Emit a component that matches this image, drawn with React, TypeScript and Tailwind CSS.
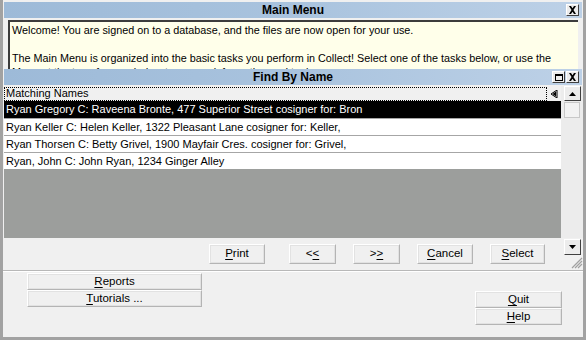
import React from 'react';

const rows = [
  'Ryan Gregory C: Raveena Bronte, 477 Superior Street cosigner for: Bron',
  'Ryan Keller C: Helen Keller, 1322 Pleasant Lane cosigner for: Keller,',
  'Ryan Thorsen C: Betty Grivel, 1900 Mayfair Cres. cosigner for: Grivel,',
  'Ryan, John C: John Ryan, 1234 Ginger Alley',
];

function TitleBar({ title, children }: { title: string; children?: React.ReactNode }) {
  return (
    <div className="relative h-[16px] bg-gradient-to-r from-[#9dbad8] via-[#a9c3de] to-[#bdd1e7] flex items-center justify-center">
      <span className="font-bold text-[12px] leading-none text-black">{title}</span>
      <div className="absolute right-[3px] top-[2px] flex gap-[1px]">{children}</div>
    </div>
  );
}

function BoxBtn({ children }: { children: React.ReactNode }) {
  return (
    <div className="w-[13px] h-[12px] bg-[#ececec] border-t border-l border-white border-r border-b border-r-[#404040] border-b-[#404040] flex items-center justify-center">
      {children}
    </div>
  );
}

function Btn({ label, u, className }: { label: string; u: number; className: string }) {
  return (
    <button
      className={
        'bg-[#f0f0f0] border border-t-white border-l-white border-r-[#b4b4b4] border-b-[#b4b4b4] shadow-[inset_0_0_0_1px_#e2e2e2] text-[11.5px] text-black flex items-center justify-center ' +
        className
      }
    >
      <span>
        {label.slice(0, u)}
        <span className="underline underline-offset-2">{label[u]}</span>
        {label.slice(u + 1)}
      </span>
    </button>
  );
}

function CloseIcon() {
  return (
    <svg width="9" height="8" viewBox="0 0 9 8">
      <path d="M1 0h2l1.5 2.2L6 0h2L5.5 4 8 8H6L4.5 5.8 3 8H1l2.5-4z" fill="#000" />
    </svg>
  );
}

export default function App() {
  return (
    <div
      className="w-[586px] h-[340px] overflow-hidden bg-[#f0f0f0] border-l-[3px] border-r-[3px] border-b-[3px] border-[#a2a2a2] flex flex-col text-black"
      style={{ fontFamily: '"Liberation Sans", Arial, sans-serif' }}
    >
      {/* Main Menu */}
      <div className="mt-[2px] mx-[1px]">
        <TitleBar title="Main Menu">
          <BoxBtn>
            <CloseIcon />
          </BoxBtn>
        </TitleBar>
      </div>
      <div className="mx-[5px] mt-[2px] h-[49px] overflow-hidden bg-[#ffffea] border-t-2 border-l-2 border-[#3c3c3c] px-[2px] pt-[1px] text-[10.8px] leading-[14px]">
        <p>Welcome! You are signed on to a database, and the files are now open for your use.</p>
        <p className="mt-[14px]">
          The Main Menu is organized into the basic tasks you perform in Collect! Select one of the tasks below, or use the
          Menu at the top of your window to access information and tools.
        </p>
      </div>

      {/* Find By Name */}
      <div className="mx-[1px]">
        <TitleBar title="Find By Name">
          <BoxBtn>
            <div className="w-[8px] h-[7px] border border-black border-t-2" />
          </BoxBtn>
          <BoxBtn>
            <CloseIcon />
          </BoxBtn>
        </TitleBar>
      </div>
      <div className="flex h-[152px] mt-[1px]">
        <div className="w-[557px] ml-[1px] flex flex-col">
          <div className="h-[15px] flex items-center">
            <div className="flex-1 h-[14px] border border-dotted border-black flex items-center px-[1px] text-[11px] bg-[#f0f0f0]">
              Matching Names
            </div>
            <div className="w-[14px] flex items-center justify-center">
              <svg width="7" height="8" viewBox="0 0 7 8">
                <path d="M6 0v8L0 4z" fill="none" stroke="#000" strokeWidth="1" />
                <path d="M5 1.5v5L1.5 4z" fill="#000" />
              </svg>
            </div>
          </div>
          <div className="flex-1 bg-[#9c9e9c] flex flex-col">
            {rows.map((r, i) => (
              <div
                key={i}
                className={
                  i === 0
                    ? 'h-[17px] bg-black text-white text-[11px] leading-[17px] px-[2px]'
                    : 'h-[17px] bg-white text-[11px] leading-[16px] px-[2px] border-t border-[#a6a6a6] first:border-t-0'
                }
              >
                {r}
              </div>
            ))}
          </div>
        </div>
        <div className="flex-1 bg-[#ececec] flex flex-col items-center">
          <div className="w-[17px] h-[15px] bg-[#ececec] border border-t-white border-l-white border-r-[#404040] border-b-[#404040] flex items-center justify-center">
            <svg width="7" height="4" viewBox="0 0 7 4">
              <path d="M3.5 0L7 4H0z" fill="#000" />
            </svg>
          </div>
          <div className="w-[16px] h-[16px] mt-[1px] bg-[#f2f2f2] border border-[#c8c8c8]" />
        </div>
      </div>

      {/* dialog buttons */}
      <div className="relative h-[32px] flex items-center gap-[17px] pl-[206px]">
        <Btn label="Print" u={0} className="w-[56px] h-[20px]" />
        <Btn label="<<" u={1} className="w-[47px] h-[20px] ml-[7px]" />
        <Btn label=">>" u={1} className="w-[47px] h-[20px]" />
        <Btn label="Cancel" u={0} className="w-[56px] h-[20px]" />
        <Btn label="Select" u={0} className="w-[55px] h-[20px]" />
        <div className="absolute right-[2px] top-[1px] w-[17px] h-[16px] bg-[#ececec] border border-t-white border-l-white border-r-[#404040] border-b-[#404040] flex items-center justify-center">
          <svg width="7" height="4" viewBox="0 0 7 4">
            <path d="M0 0h7L3.5 4z" fill="#000" />
          </svg>
        </div>
        <svg className="absolute right-[0px] bottom-[1px]" width="12" height="12" viewBox="0 0 12 12">
          <path d="M11 1L1 11M11 4L4 11M11 7L7 11" stroke="#a0a0a0" strokeWidth="1.2" />
        </svg>
      </div>
      <div className="h-[2px] bg-[#b8b8b8] border-b border-white" />

      {/* lower menu */}
      <div className="relative flex-1">
        <div className="absolute left-[24px] top-[1px] flex flex-col">
          <Btn label="Reports" u={0} className="w-[175px] h-[17px]" />
          <Btn label="Tutorials ..." u={0} className="w-[175px] h-[17px]" />
        </div>
        <div className="absolute left-[472px] top-[19px] flex flex-col">
          <Btn label="Quit" u={0} className="w-[87px] h-[17px]" />
          <Btn label="Help" u={0} className="w-[87px] h-[17px]" />
        </div>
      </div>
    </div>
  );
}
